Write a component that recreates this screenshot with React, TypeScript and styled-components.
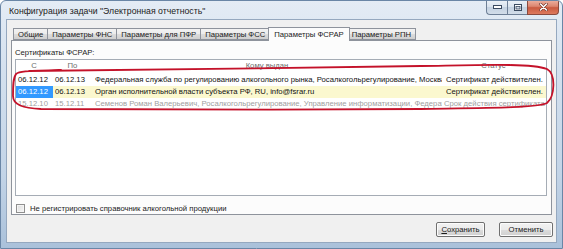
import React from "react";
import styled, { createGlobalStyle, css } from "styled-components";

const GlobalStyle = createGlobalStyle`
  html, body { margin: 0; padding: 0; background: #ffffff; }
  body { font-family: "Liberation Sans", Arial, sans-serif; }
  * { box-sizing: border-box; }
`;

const Window = styled.div`
  position: relative;
  width: 563px;
  height: 249px;
  display: flex;
  flex-direction: column;
  padding: 0 5px 5px 5px;
  background: linear-gradient(180deg, #e4ecf5 0%, #d3e0ee 30%, #c3d4e7 70%, #aac1da 100%);
  border: 1px solid #6a86a6;
  border-radius: 6px 6px 0 0;
  overflow: hidden;
`;

const TitleBar = styled.div`
  height: 18px;
  flex: none;
  display: flex;
  align-items: flex-start;
  justify-content: space-between;
`;

const Title = styled.div`
  padding: 5px 0 0 3px;
  font-family: "Liberation Sans", Arial, sans-serif;
  font-size: 8.7px;
  color: #1b1b1b;
  white-space: nowrap;
`;

const CaptionButtons = styled.div`
  display: flex;
  margin-right: -2px;
  margin-top: -1px;
`;

const capBase = css`
  height: 15px;
  display: flex;
  align-items: center;
  justify-content: center;
  border: 1px solid #6d7f96;
  border-top: none;
`;

const CapBtn = styled.div`
  ${capBase};
  width: 20px;
  background: linear-gradient(180deg, #edf2f8 0%, #d8e2ed 50%, #c3d1e1 51%, #d2dde9 100%);
  border-right: none;
  &:first-child { border-bottom-left-radius: 4px; width: 21px; }
`;

const CloseBtn = styled.div`
  ${capBase};
  width: 32px;
  border-color: #8a4a3e;
  border-bottom-right-radius: 4px;
  background: linear-gradient(180deg, #eeb3a3 0%, #dc8670 45%, #c95a40 55%, #dd7a5e 100%);
`;

const Client = styled.div`
  flex: 1;
  display: flex;
  flex-direction: column;
  background: #f0f0f0;
  border: 1px solid #95a8bf;
`;

const TabStrip = styled.div`
  height: 20px;
  flex: none;
  display: flex;
  align-items: flex-end;
  padding-left: 6px;
`;

const Tab = styled.div<{ $active?: boolean }>`
  height: ${(p) => (p.$active ? 14 : 12)}px;
  padding: 0 ${(p) => (p.$active ? 5 : 4)}px;
  margin: 0 ${(p) => (p.$active ? -2 : 0)}px ${(p) => (p.$active ? -1 : 0)}px;
  display: flex;
  align-items: center;
  font-size: 7.7px;
  color: #1a1a1a;
  white-space: nowrap;
  border: 1px solid #8e939c;
  border-bottom: ${(p) => (p.$active ? "none" : "1px solid #8e939c")};
  border-left-width: ${(p) => (p.$active ? 1 : 0)}px;
  background: ${(p) =>
    p.$active ? "#fcfcfc" : "linear-gradient(180deg, #f3f3f3 0%, #ebebeb 50%, #dddddd 51%, #cfcfcf 100%)"};
  position: relative;
  z-index: ${(p) => (p.$active ? 2 : 1)};
  &:first-child { border-left-width: 1px; }
`;

const Pane = styled.div`
  height: 175px;
  flex: none;
  margin: 0 4px 0 4px;
  padding: 6px 4px 0 3px;
  background: #fcfcfc;
  border: 1px solid #8e939c;
  display: flex;
  flex-direction: column;
`;

const Label = styled.div`
  font-size: 7.7px;
  color: #1a1a1a;
  height: 11px;
  line-height: 11px;
`;

const Grid = styled.div`
  margin-top: 1px;
  height: 137px;
  flex: none;
  background: #ffffff;
  border: 1px solid #a5acb5;
  display: flex;
  flex-direction: column;
  overflow: hidden;
`;

const Line = styled.div<{ $head?: boolean }>`
  display: grid;
  grid-template-columns: 37px 40px 349px 1fr;
  height: ${(p) => (p.$head ? 13 : 12)}px;
  ${(p) => p.$head && "margin-bottom: 1px;"}
`;

const Cell = styled.div<{
  $tone?: "normal" | "current" | "dim" | "head";
  $sel?: boolean;
  $align?: "left" | "center" | "right";
}>`
  font-size: 7.7px;
  line-height: 12px;
  white-space: nowrap;
  overflow: hidden;
  padding: 0 3px 0 2px;
  text-align: ${(p) => p.$align || "left"};
  color: ${(p) =>
    p.$sel ? "#ffffff" : p.$tone === "dim" ? "#a0a0a0" : p.$tone === "head" ? "#6d6d6d" : "#111111"};
  background: ${(p) => (p.$sel ? "#3399ff" : p.$tone === "current" ? "#fbf8cf" : "transparent")};
`;

const CheckRow = styled.label`
  display: flex;
  align-items: center;
  gap: 5px;
  margin: 7px 0 0 1px;
  height: 11px;
  font-size: 7.7px;
  color: #1a1a1a;
`;

const Box = styled.span`
  width: 9px;
  height: 9px;
  border: 1px solid #8f8f8f;
  background: linear-gradient(135deg, #dcdcdc 0%, #f6f6f6 100%);
  box-shadow: inset 0 0 0 1px #f4f4f4;
`;

const ButtonRow = styled.div`
  display: flex;
  justify-content: flex-end;
  gap: 14px;
  margin-top: 7px;
  padding-right: 3px;
`;

const Button = styled.div<{ $w: number }>`
  width: ${(p) => p.$w}px;
  height: 15px;
  display: flex;
  align-items: center;
  justify-content: center;
  font-size: 7.7px;
  color: #1a1a1a;
  border: 1px solid #707070;
  border-radius: 2px;
  background: linear-gradient(180deg, #f2f2f2 0%, #ebebeb 50%, #dddddd 51%, #cfcfcf 100%);
  box-shadow: inset 0 0 0 1px #fcfcfc;
`;

const Accel = styled.span`
  text-decoration: underline;
`;

const Annotation = styled.svg`
  position: absolute;
  left: 0;
  top: 0;
  pointer-events: none;
`;

const tabs = [
  "Общие",
  "Параметры ФНС",
  "Параметры для ПФР",
  "Параметры ФСС",
  "Параметры ФСРАР",
  "Параметры РПН",
];

type RowData = {
  from: string;
  to: string;
  who: string;
  status: string;
  tone: "normal" | "current" | "dim";
};

const rows: RowData[] = [
  {
    from: "06.12.12",
    to: "06.12.13",
    who: "Федеральная служба по регулированию алкогольного рынка, Росалкогольрегулирование, Москва",
    status: "Сертификат действителен.",
    tone: "normal",
  },
  {
    from: "06.12.12",
    to: "06.12.13",
    who: "Орган исполнительной власти субъекта РФ, RU, info@fsrar.ru",
    status: "Сертификат действителен.",
    tone: "current",
  },
  {
    from: "15.12.10",
    to: "15.12.11",
    who: "Семенов Роман Валерьевич, Росалкогольрегулирование, Управление информатизации, Федерат",
    status: "Срок действия сертификата истек.",
    tone: "dim",
  },
];

export default function App() {
  return (
    <>
      <GlobalStyle />
      <Window>
        <TitleBar>
          <Title>Конфигурация задачи "Электронная отчетность"</Title>
          <CaptionButtons>
            <CapBtn>
              <svg width="9" height="4" viewBox="0 0 9 4">
                <rect x="0.5" y="0.5" width="8" height="3" fill="#fff" stroke="#3a4a60" strokeWidth="1" />
              </svg>
            </CapBtn>
            <CapBtn>
              <svg width="8" height="7" viewBox="0 0 8 7">
                <rect x="0.5" y="0.5" width="7" height="6" fill="#fff" stroke="#3a4a60" strokeWidth="1" />
                <rect x="2" y="2.5" width="4" height="2.5" fill="#cfd9e6" stroke="#3a4a60" strokeWidth="0.8" />
              </svg>
            </CapBtn>
            <CloseBtn>
              <svg width="9" height="8" viewBox="0 0 9 8">
                <path d="M1.5 1 L7.5 7 M7.5 1 L1.5 7" stroke="#6a2a20" strokeWidth="2.6" strokeLinecap="round" />
                <path d="M1.5 1 L7.5 7 M7.5 1 L1.5 7" stroke="#ffffff" strokeWidth="1.6" strokeLinecap="round" />
              </svg>
            </CloseBtn>
          </CaptionButtons>
        </TitleBar>
        <Client>
          <TabStrip>
            {tabs.map((t) => (
              <Tab key={t} $active={t === "Параметры ФСРАР"}>
                {t}
              </Tab>
            ))}
          </TabStrip>
          <Pane>
            <Label>Сертификаты ФСРАР:</Label>
            <Grid>
              <Line $head>
                <Cell $tone="head" $align="center">С</Cell>
                <Cell $tone="head" $align="center">По</Cell>
                <Cell $tone="head" $align="center">Кому выдан</Cell>
                <Cell $tone="head" $align="center">Статус</Cell>
              </Line>
              {rows.map((r, i) => (
                <Line key={i}>
                  <Cell $tone={r.tone} $sel={r.tone === "current"}>{r.from}</Cell>
                  <Cell $tone={r.tone}>{r.to}</Cell>
                  <Cell $tone={r.tone}>{r.who}</Cell>
                  <Cell $tone={r.tone} $align={r.tone === "dim" ? "left" : "right"}>{r.status}</Cell>
                </Line>
              ))}
            </Grid>
            <CheckRow>
              <Box />
              Не регистрировать справочник алкогольной продукции
            </CheckRow>
          </Pane>
          <ButtonRow>
            <Button $w={49}>
              <span>
                <Accel>С</Accel>охранить
              </span>
            </Button>
            <Button $w={54}>Отменить</Button>
          </ButtonRow>
        </Client>
        <Annotation width="563" height="249" viewBox="0 0 563 249">
          <path
            d="M 28 70 C 120 69, 300 67, 420 65 C 480 64, 530 62, 546 68 C 555 73, 554 95, 546 102 C 536 107, 480 107, 420 108 C 300 109, 120 109, 40 108 C 22 107, 12 104, 12 95 C 12 85, 12 77, 15 73 C 18 70, 26 70, 60 69"
            fill="none"
            stroke="#c4122a"
            strokeWidth="1.8"
            strokeLinecap="round"
          />
        </Annotation>
      </Window>
    </>
  );
}
